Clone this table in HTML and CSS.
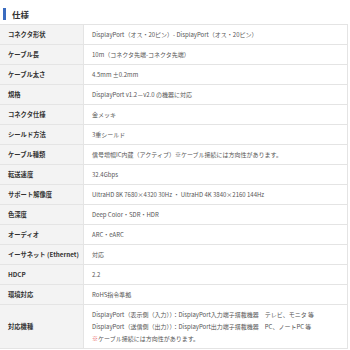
FILE: index.html
```html
<!DOCTYPE html>
<html lang="ja">
<head>
<meta charset="utf-8">
<meta name="format-detection" content="telephone=no">
<link rel="stylesheet" href="styles.css">
</head>
<body>
<h2 class="heading">仕様</h2>
<table class="spec">
<tr><th>コネクタ形状</th><td>DisplayPort（オス・20ピン）- DisplayPort（オス・20ピン）</td></tr>
<tr><th>ケーブル長</th><td><span class="val">10m（コネクタ先端-コネクタ先端）</span></td></tr>
<tr><th>ケーブル太さ</th><td>4.5mm ±0.2mm</td></tr>
<tr><th>規格</th><td>DisplayPort v1.2－v2.0 の機器に対応</td></tr>
<tr><th>コネクタ仕様</th><td>金メッキ</td></tr>
<tr><th>シールド方法</th><td>3重シールド</td></tr>
<tr><th>ケーブル種類</th><td>信号増幅IC内蔵（アクティブ）※ケーブル接続には方向性があります。</td></tr>
<tr><th>転送速度</th><td>32.4Gbps</td></tr>
<tr><th>サポート解像度</th><td>UltraHD 8K 7680×4320 30Hz ・ UltraHD 4K 3840×2160 144Hz</td></tr>
<tr><th>色深度</th><td>Deep Color・SDR・HDR</td></tr>
<tr><th>オーディオ</th><td>ARC・eARC</td></tr>
<tr><th>イーサネット (Ethernet)</th><td>対応</td></tr>
<tr><th>HDCP</th><td>2.2</td></tr>
<tr><th>環境対応</th><td>RoHS指令準拠</td></tr>
<tr><th>対応機種</th><td>DisplayPort（表示側（入力））：DisplayPort入力端子搭載機器　テレビ、モニタ 等<br>DisplayPort（送信側（出力））：DisplayPort出力端子搭載機器　PC、ノートPC 等<br><span class="note">※</span>ケーブル接続には方向性があります。</td></tr>
</table>
</body>
</html>
```
FILE: styles.css
```css
html, body {
  margin: 0;
  padding: 0;
  background: #ffffff;
}
body {
  font-family: "Noto Sans CJK JP", "Noto Sans", sans-serif;
  color: #333333;
  width: 348px;
}
.heading {
  margin: 8px 0 4px 3px;
  padding-left: 6px;
  border-left: 3px solid #3b6cc0;
  font-size: 8.5px;
  line-height: 12px;
  height: 12px;
  font-weight: 700;
  color: #333333;
}
.spec {
  width: 348px;
  border-collapse: collapse;
  table-layout: fixed;
}
.spec th, .spec td {
  border: 1px solid #e4e4e4;
  padding: 3.5px 8px;
  line-height: 12px;
  text-align: left;
  vertical-align: middle;
}
.spec th {
  width: 75px;
  padding-right: 0;
  white-space: nowrap;
  background: #f3f3f3;
  font-size: 6.3px;
  font-weight: 700;
  color: #333333;
  border-left: none;
}
.spec td {
  font-size: 6px;
  color: #555555;
  font-weight: 400;
}
.val {
  color: #555555;
}
.note {
  color: #e8625f;
}
```
